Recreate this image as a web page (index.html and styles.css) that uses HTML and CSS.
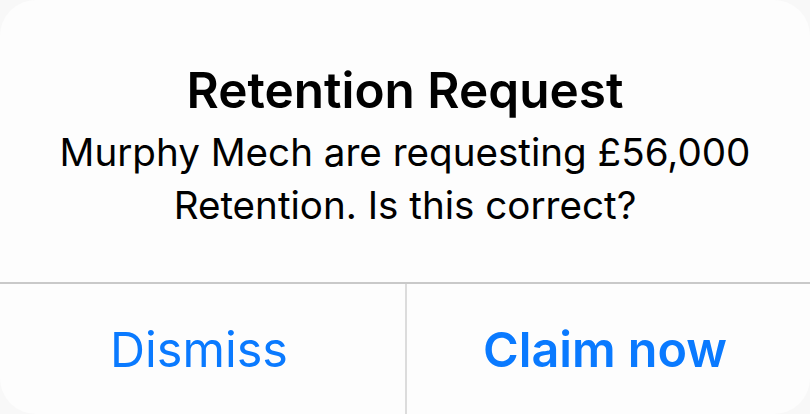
FILE: index.html
```html
<!DOCTYPE html>
<html lang="en">
  <head>
    <meta charset="UTF-8" />
    <meta name="viewport" content="width=device-width, initial-scale=1.0" />
    <title>Retention Request</title>
    <link rel="stylesheet" href="styles.css">
  </head>
  <body>
    <div class="alert">
      <div class="alert-body">
        <h1 class="alert-title">Retention Request</h1>
        <p class="alert-message">
          Murphy Mech are requesting £56,000<br />
          Retention. Is this correct?
        </p>
      </div>
      <div class="alert-actions">
        <button class="alert-btn">Dismiss</button>
        <button class="alert-btn primary">Claim now</button>
      </div>
    </div>
  </body>
</html>
```

FILE: styles.css
```css
html,
body {
  margin: 0;
  height: 100%;
}

body {
  background: #f8f8f8;
  font-family: "Inter", "Liberation Sans", sans-serif;
  overflow: hidden;
}

.alert {
  height: 100vh;
  display: flex;
  flex-direction: column;
  background: #fdfdfd;
  border-radius: 36px;
}

.alert-body {
  height: 282px;
  box-sizing: border-box;
  padding-top: 62px;
  text-align: center;
  color: #000;
}

.alert-title {
  margin: 0;
  font-size: 49.5px;
  line-height: 56px;
  font-weight: 600;
}

.alert-message {
  margin: 8px 0 0;
  font-size: 38.6px;
  line-height: 53px;
  font-weight: 400;
}

.alert-actions {
  flex: 1;
  display: grid;
  grid-template-columns: 405px 1fr;
  border-top: 2px solid #c9c9c9;
}

.alert-btn {
  background: none;
  border: none;
  padding: 0 7px 0 0;
  font-family: inherit;
  font-size: 48.5px;
  color: #0a7aff;
  cursor: pointer;
}

.alert-btn + .alert-btn {
  border-left: 2px solid #dcdcdc;
}

.primary {
  font-weight: 600;
}
```
